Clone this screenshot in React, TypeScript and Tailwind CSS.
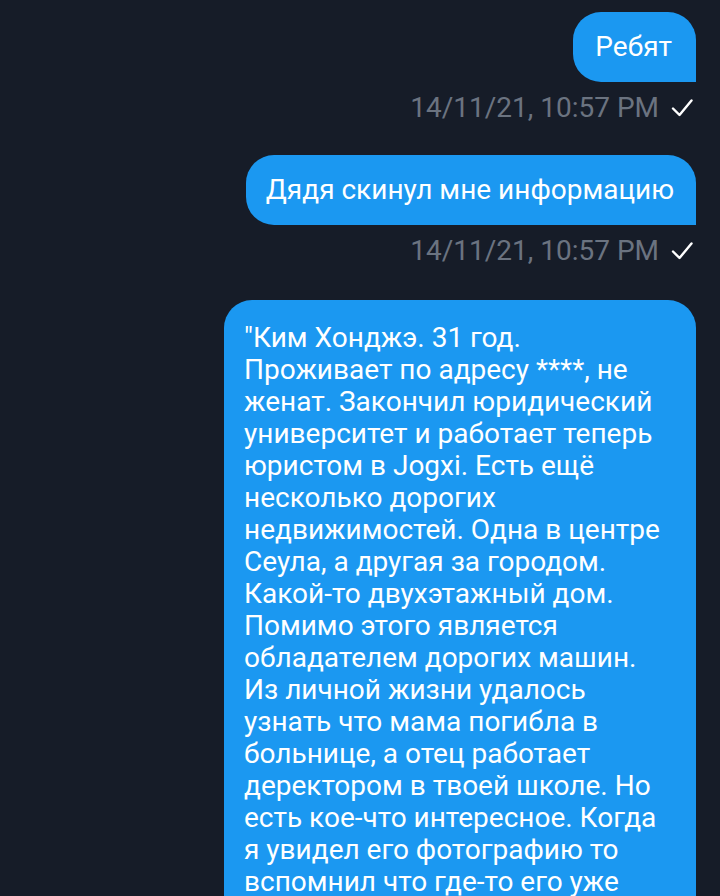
import React from "react";

const Check = () => (
  <svg width="22" height="20" viewBox="0 0 22 20" fill="none" className="shrink-0">
    <path d="M2 10.5 L8.5 17 L20.5 2.5" stroke="#ffffff" strokeWidth="2.4" strokeLinecap="round" strokeLinejoin="round" />
  </svg>
);

const Stamp = () => (
  <div className="mt-[10px] flex items-center gap-[12px] pr-[3px] h-[32px] text-[28px] leading-[32px] text-[#6b7380]">
    <span>14/11/21, 10:57 PM</span>
    <Check />
  </div>
);

const lines = [
  "\"Ким Хонджэ. 31 год.",
  "Проживает по адресу ****, не",
  "женат. Закончил юридический",
  "университет и работает теперь",
  "юристом в Jogxi. Есть ещё",
  "несколько дорогих",
  "недвижимостей. Одна в центре",
  "Сеула, а другая за городом.",
  "Какой-то двухэтажный дом.",
  "Помимо этого является",
  "обладателем дорогих машин.",
  "Из личной жизни удалось",
  "узнать что мама погибла в",
  "больнице, а отец работает",
  "деректором в твоей школе. Но",
  "есть кое-что интересное. Когда",
  "я увидел его фотографию то",
  "вспомнил что где-то его уже",
];

export default function App() {
  return (
    <div
      className="w-[720px] h-[896px] overflow-hidden bg-[#161c28] flex flex-col items-end pr-[24px]"
      style={{ fontFamily: "Roboto, 'Noto Sans', sans-serif" }}
    >
      <div className="mt-[12px] rounded-[28px] rounded-br-none bg-[#1b98f1] pl-[22px] pr-[24px] py-[19px] text-[28px] leading-[32px] text-white">
        Ребят
      </div>
      <Stamp />
      <div className="mt-[31px] rounded-[28px] rounded-br-none bg-[#1b98f1] pl-[20px] pr-[22px] py-[19px] text-[28px] leading-[32px] text-white whitespace-nowrap">
        Дядя скинул мне информацию
      </div>
      <Stamp />
      <div className="mt-[33px] w-[472px] rounded-t-[28px] bg-[#1b98f1] pl-[20px] pr-[16px] pt-[22px] text-[28px] leading-[32px] text-white">
        {lines.map((l, i) => (
          <div key={i} className="whitespace-nowrap">{l}</div>
        ))}
      </div>
    </div>
  );
}
